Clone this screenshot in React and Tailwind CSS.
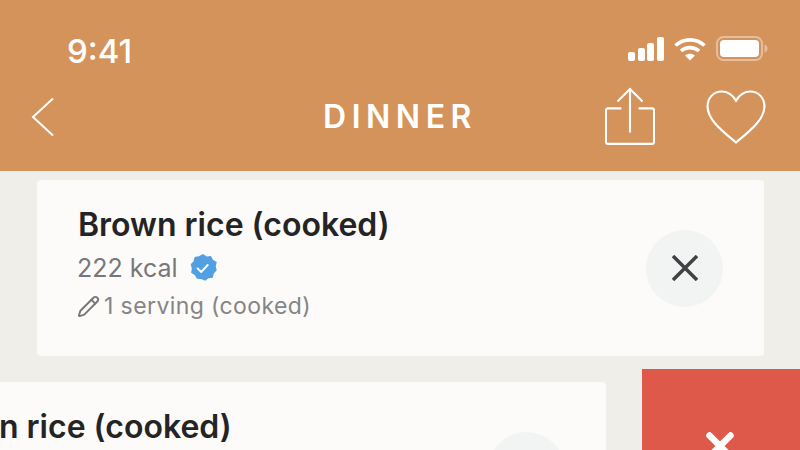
import { Pencil } from 'lucide-react'

function FoodCard({ className }) {
    return (
        <div className={`flex items-center justify-between rounded-[4px] bg-[#fcfbf9] ${className}`}>
            <div className="flex flex-col pb-[9px]">
                <div className="text-[32px] leading-[38px] font-semibold text-[#242424]">Brown rice (cooked)</div>
                <div className="flex items-center gap-[10px] mt-[8px] -ml-px text-[25px] leading-[32px] text-[#77777a]">
                    <span>222 kcal</span>
                    <svg width="30" height="30" viewBox="0 0 28 28">
                        <path d="M14 1l3.400 2.200 4-.500 1.900 3.600 3.500 2-.900 4 .900 3.900-2.700 2.900-1 3.900-4 .500-3.200 2.500-3.600-1.800-4-.100-2-3.500-3.400-2.100.700-4-1.100-3.900 2.800-2.900.800-4 4-.700z" fill="#529fe2" />
                        <path d="M9 14.500l3.400 3.200 6-6.500" fill="none" stroke="#fff" strokeWidth="1.800" strokeLinecap="round" strokeLinejoin="round" />
                    </svg>
                </div>
                <div className="flex items-center gap-[4px] mt-[7px] -ml-px text-[23px] leading-[30px] tracking-[0.4px] text-[#858588]">
                    <Pencil size={23} strokeWidth={2} className="text-[#77777a]" />
                    <span>1 serving (cooked)</span>
                </div>
            </div>
            <div className="flex items-center justify-center w-[77px] h-[77px] rounded-full bg-[#f2f3f3]">
                <svg width="26" height="26" viewBox="0 0 26 26">
                    <path d="M1 1l24 24M25 1L1 25" stroke="#3f4144" strokeWidth="3.500" fill="none" />
                </svg>
            </div>
        </div>
    )
}

export default function App() {
    return (
        <div className="w-[800px] h-[450px] overflow-hidden bg-[#f0eee8] font-['Inter',sans-serif]">
            <div className="h-[171px] bg-[#d4935b] text-white flex flex-col">
                <div className="flex items-center justify-between pl-[67px] pr-[32px] pt-[30px] h-[68px]">
                    <span className="text-[33px] leading-[38px] font-medium mt-[3px]">9:41</span>
                    <div className="flex items-center gap-[10px]">
                        <svg width="36" height="24" viewBox="0 0 36 24" fill="#fff">
                            <rect x="0" y="15" width="7" height="9" rx="2" />
                            <rect x="10" y="11" width="7" height="13" rx="2" />
                            <rect x="19" y="6" width="7" height="18" rx="2" />
                            <rect x="29" y="0" width="7" height="24" rx="2" />
                        </svg>
                        <svg width="32" height="24" viewBox="0 0 32 24" fill="none" stroke="#fff" strokeWidth="3.600">
                            <path d="M1.500 8.500C9.500 1 22.500 1 30.500 8.500" />
                            <path d="M7 14c5-4.500 13-4.500 18 0" />
                            <path d="M16 23.500l-5-5c3-2.500 7-2.500 10 0z" fill="#fff" stroke="none" />
                        </svg>
                        <svg width="52" height="26" viewBox="0 0 52 26" fill="none">
                            <rect x="1" y="1" width="45" height="23" rx="6.500" stroke="#fff" strokeOpacity="0.4" strokeWidth="2" />
                            <rect x="4" y="4" width="39" height="17" rx="4" fill="#fff" />
                            <path d="M48.500 8.500c1.800.5 3 2.200 3 4s-1.200 3.500-3 4z" fill="#fff" fillOpacity="0.4" />
                        </svg>
                    </div>
                </div>
                <div className="relative flex items-center justify-between flex-1 pl-[31px] pr-[34px] pb-[6px]">
                    <svg width="24" height="40" viewBox="0 0 24 40" fill="none" stroke="#fff" strokeWidth="2">
                        <path d="M22 1.500L2 20l20 18.500" />
                    </svg>
                    <div className="absolute left-0 right-0 text-center text-[32px] leading-[40px] font-semibold tracking-[5.5px]">DINNER</div>
                    <div className="flex items-center gap-[51px]">
                        <svg width="50" height="60" viewBox="0 0 52 62" fill="none" stroke="#fff" strokeWidth="2.200">
                            <path d="M17 22H3a2 2 0 0 0-2 2v33a2 2 0 0 0 2 2h46a2 2 0 0 0 2-2V24a2 2 0 0 0-2-2H35" />
                            <path d="M26 47V2M13 15L26 2l13 13" />
                        </svg>
                        <svg width="60" height="54" viewBox="0 0 62 56" fill="none" stroke="#fff" strokeWidth="2.200">
                            <path d="M31 11C27 4 21 1.500 16 1.500 7.500 1.500 1.500 8.500 1.500 17c0 14 16 26 29.500 37.500C44.500 43 60.500 31 60.500 17c0-8.500-6-15.500-14.500-15.500-5 0-11 2.500-15 9.500z" />
                        </svg>
                    </div>
                </div>
            </div>
            <FoodCard className="ml-[37px] mt-[9px] w-[727px] h-[176px] pl-[41px] pr-[41px]" />
            <div className="flex ml-[-121px] mt-[13px] w-[921px]">
                <FoodCard className="mt-[13px] w-[727px] h-[176px] pl-[41px] pr-[41px] shrink-0" />
                <div className="ml-[36px] flex-1 h-[190px] bg-[#de5949] flex justify-center pt-[63px] pr-[2px]">
                    <svg width="28" height="28" viewBox="0 0 28 28">
                        <path d="M3.500 3.500l21 21M24.500 3.500l-21 21" stroke="#fff" strokeWidth="6.500" strokeLinecap="round" fill="none" />
                    </svg>
                </div>
            </div>
        </div>
    )
}
